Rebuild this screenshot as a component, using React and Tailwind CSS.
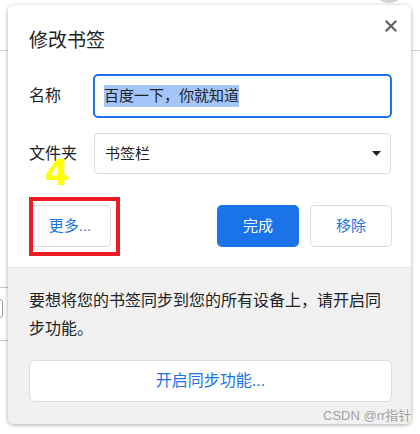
export default function App() {
  return (
    <div className="relative w-[420px] h-[434px] overflow-hidden bg-white font-['Liberation_Sans','Noto_Sans_CJK_SC',sans-serif] text-[#202124]">
      {/* page behind the popup */}
      <div className="absolute left-0 right-0 top-[50px] h-px bg-[#d5d7da]" />
      <div className="absolute left-[373px] top-[-30px] w-[32px] h-[33px] rounded-full bg-[#cfd1d4]" />
      <div className="absolute left-[-20px] top-[287px] w-[28px] h-[54px] border-y border-[#c4c6c9]" />
      <div className="absolute left-[-10px] top-[299px] w-[13px] h-[19px] rounded-[3px] border border-[#9a9c9f]" />

      {/* dialog */}
      <div className="absolute left-[8px] top-[5px] w-[403px] h-[419px] rounded-[6px] bg-white shadow-[0_1px_4px_rgba(0,0,0,0.35)] flex flex-col overflow-hidden">
        <div className="relative pl-[21px] pr-[19px] pb-[20px]">
          <button className="absolute top-[15px] right-[14px] w-[12px] h-[12px] flex items-center justify-center">
            <svg width="12" height="12" viewBox="0 0 12 12">
              <path d="M1.5 1.5 L10.5 10.5 M10.5 1.5 L1.5 10.5" stroke="#5f6368" strokeWidth="2.2" strokeLinecap="square" />
            </svg>
          </button>
          <div className="pt-[24px] text-[19px] leading-[24px]">修改书签</div>

          <div className="mt-[21px] flex items-center">
            <div className="w-[64px] text-[16px] leading-[20px]">名称</div>
            <div className="w-[299px] h-[44px] rounded-[5px] border-2 border-[#1a73e8] flex items-center pl-[9px]">
              <span className="text-[15px] leading-[22px] bg-[#a3c5f7]">百度一下，你就知道</span>
            </div>
          </div>

          <div className="mt-[15px] flex items-center">
            <div className="w-[64px] text-[16px] leading-[20px]">文件夹</div>
            <div className="ml-px w-[297px] h-[41px] rounded-[4px] border border-[#dadce0] flex items-center justify-between pl-[10px] pr-[9px]">
              <span className="text-[15px] leading-[20px]">书签栏</span>
              <svg width="9" height="5" viewBox="0 0 9 5">
                <path d="M0 0 L9 0 L4.5 5 Z" fill="#202124" />
              </svg>
            </div>
          </div>

          <div className="mt-[31px] flex items-center justify-between">
            <button className="w-[82px] h-[42px] rounded-[5px] border border-[#dadce0] bg-white text-[15px] text-[#1a73e8]">更多...</button>
            <div className="flex gap-[11px]">
              <button className="w-[82px] h-[42px] rounded-[5px] bg-[#1a73e8] text-[15px] text-white">完成</button>
              <button className="w-[82px] h-[42px] rounded-[5px] border border-[#dadce0] bg-white text-[15px] text-[#1a73e8]">移除</button>
            </div>
          </div>
        </div>

        <div className="flex-1 border-t border-[#e3e3e3] bg-[#f1f1f1] pl-[21px] pr-[19px] pt-[19px]">
          <p className="text-[16px] leading-[28px]">要想将您的书签同步到您的所有设备上，请开启同步功能。</p>
          <button className="mt-[17px] w-full h-[42px] rounded-[6px] border border-[#dadce0] bg-white text-[16px] text-[#1a73e8]">开启同步功能...</button>
        </div>
      </div>

      {/* annotations */}
      <div className="absolute left-[29px] top-[197px] w-[91px] h-[59px] border-[4px] border-[#ec1c24]" />
      <div className="absolute left-[45px] top-[153px] text-[36px] leading-[40px] font-bold text-[#ffff00] font-['DejaVu_Sans',sans-serif]">4</div>
      <div className="absolute left-[323px] top-[408px] text-[13px] leading-[16px] text-[#9a9a9a] opacity-90">CSDN @rr指针</div>
    </div>
  );
}
